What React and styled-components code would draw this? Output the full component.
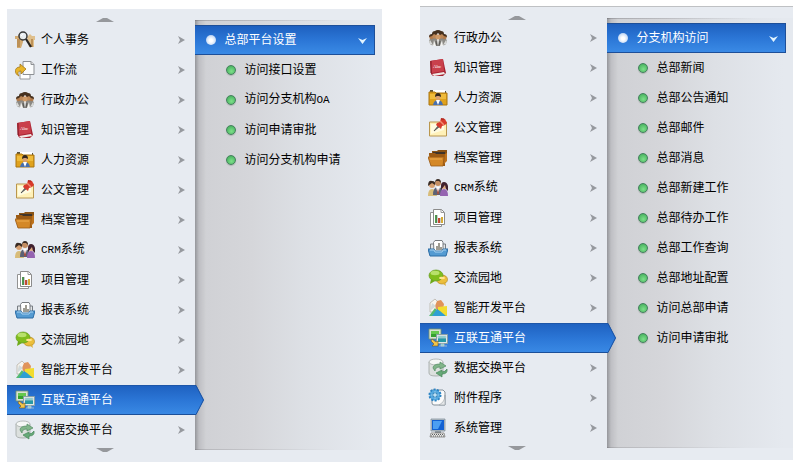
import React, { useState } from "react";
import styled, { createGlobalStyle, css } from "styled-components";

const GlobalStyle = createGlobalStyle`
  * { box-sizing: border-box; }
  body {
    margin: 0;
    background: #fff;
    color: #000;
    font-family: "Noto Sans CJK SC", sans-serif;
    font-size: 12px;
    line-height: 30px;
  }
  button, a { font: inherit; color: inherit; }
`;

const Page = styled.main`
  display: grid;
  grid-template-columns: 375fr 373fr;
  align-items: start;
  column-gap: 38px;
  padding: 6px 7px 0;
`;

const Panel = styled.section`
  display: grid;
  grid-template-columns: 1fr 1fr;
  align-items: start;
  background: #e7ebf1;
  padding: 9px 0 10px;
  ${(p) =>
    p.$ruled
      ? css`
          border-top: 1px solid #bfc1c4;
        `
      : css`
          margin-top: 3px;
        `}
`;

const MainMenu = styled.nav`
  display: flex;
  flex-direction: column;
`;

const List = styled.ul`
  list-style: none;
  margin: 0;
  padding: 0;
`;

const ScrollButton = styled.button`
  display: flex;
  justify-content: center;
  align-items: ${(p) => (p.$down ? "flex-end" : "flex-start")};
  height: 7px;
  padding: 0;
  border: 0;
  background: none;
  margin-left: 8px;
  cursor: pointer;
  svg { display: block; flex: none; }
`;

const MenuButton = styled.button`
  position: relative;
  display: flex;
  align-items: center;
  gap: 6px;
  width: 100%;
  height: 30px;
  padding: 0 10px 0 8px;
  border: 0;
  background: none;
  text-align: left;
  white-space: nowrap;
  cursor: pointer;
  ${(p) =>
    p.$active &&
    css`
      z-index: 1;
      color: #fff;
      background: linear-gradient(#1e60bf, #2b76d6 50%, #3a8ae5);
      box-shadow: inset 0 1px #1d56a8, inset 0 -1px #1b4f99;
    `}
`;

const Label = styled.span`
  flex: 1;
  padding-bottom: 2px;
`;

const Latin = styled.span`
  font-family: "Liberation Mono", monospace;
  font-size: 11px;
`;

const Pointer = styled.svg`
  position: absolute;
  left: 100%;
  top: 0;
`;

const SubMenu = styled.nav`
  min-height: 430px;
  margin-top: 2px;
  padding: 5px 7px 0 0;
  background:
    linear-gradient(90deg, rgba(70, 70, 75, 0.42), rgba(90, 90, 95, 0.15) 4px, transparent 11px),
    linear-gradient(90deg, rgba(120, 120, 125, 0.45), transparent 80%) top / 100% 1px no-repeat,
    linear-gradient(90deg, rgba(120, 120, 125, 0.3), transparent 75%) bottom / 100% 1px no-repeat,
    linear-gradient(90deg, #cfd0d4, #d5d6da 30%, #dde0e5 58%, #e5e9ef 95%);
`;

const GroupButton = styled.button`
  display: flex;
  align-items: center;
  gap: 9px;
  width: 100%;
  height: 30px;
  padding: 0 7px 0 11px;
  border: 1px solid #1d4f99;
  border-left: 0;
  color: #fff;
  background: linear-gradient(#1e60bf, #2b76d6 50%, #3a8ae5);
  text-align: left;
  white-space: nowrap;
  cursor: pointer;
`;

const SubLink = styled.a`
  display: flex;
  align-items: center;
  gap: 9px;
  height: 30px;
  padding-left: 31px;
  text-decoration: none;
  white-space: nowrap;
`;

const Dot = styled.span`
  flex: none;
  width: 10px;
  height: 10px;
  border-radius: 50%;
  ${(p) =>
    p.$pale
      ? css`
          background: radial-gradient(circle at 50% 55%, #fff 20%, #d5e4f8 55%, #8eb2e6);
        `
      : css`
          border: 1px solid #44805e;
          background: radial-gradient(circle at 55% 65%, #7de08a, #4cb562 75%);
          box-shadow: 0 1px 1px #aeb5b1;
        `}
`;

const IconSvg = styled.svg`
  flex: none;
  display: block;
`;

const drawings = {
  personal: (
    <>
      <path d="M0 6h3l1-2 4 4v4l-2 6H2V9H0z" fill="#d3ab72" />
      <path d="M12 7l3-3 2 2h3v4h-1v7h-5z" fill="#dfbf8c" />
      <path d="M2 9v8h3V9zM16 9v8h2V9z" fill="#bd9157" />
      <circle cx="8" cy="6" r="4" fill="#e8edf1" fillOpacity=".9" stroke="#383838" strokeWidth="1.500" />
      <path d="m11 9 5 8" stroke="#292522" strokeWidth="2.200" />
      <path d="m6 6 2-2" stroke="#fff" />
    </>
  ),
  workflow: (
    <>
      <path d="M5 7h10v12H5z" fill="#fff" stroke="#96999d" />
      <path d="M8 1.500h8l3 3v10H8z" fill="#fafbfc" stroke="#8d9095" />
      <path d="M16 1.500v3h3" fill="#ddd" stroke="#8d9095" />
      <path d="M4 16C-1 14-1 7 5 7V4l6 5-5 5v-3c-3 0-4 2-2 5z" fill="#e9b528" stroke="#a4791d" strokeWidth=".8" />
    </>
  ),
  office: (
    <>
      <path d="M1 14q0-4 4-4h10q4 0 4 4l-2 3-7 1-7-1z" fill="#8b8984" />
      <path d="m2 12 3 5-3-1-1-2zM18 12l-3 5 3-1 1-2z" fill="#d8d9d8" />
      <path d="m6 12 2 6H5zM14 12l-2 6h3zM9 11l1 7 1-7z" fill="#f3f3f1" />
      <circle cx="3.500" cy="9" r="2.300" fill="#b07a4c" />
      <circle cx="16.500" cy="9" r="2.300" fill="#b07a4c" />
      <circle cx="7" cy="8" r="2.600" fill="#bd8757" />
      <circle cx="13" cy="8" r="2.600" fill="#bd8757" />
      <circle cx="10" cy="9" r="2.500" fill="#cf9a68" />
      <path d="M1 9q0-3 3-3 0-3 3-3 1-1 3-1t3 1q3 0 3 3 3 0 3 3l-3-1-2-2-2 1-2-2-2 2-2-1-2 2z" fill="#46311f" />
      <path d="m8 13 1 5M12 13l-1 5" stroke="#4c4b49" strokeWidth=".8" />
    </>
  ),
  knowledge: (
    <>
      <path d="M2 3 15 1l3 14-3 3H5L3 16z" fill="#a62231" />
      <path d="M2 3 15 1l1 12-12 2z" fill="#c9404c" />
      <path d="m4 16 12-2 1 2-11 2z" fill="#f1e8e4" />
      <path d="M3 3v12" stroke="#7f1421" />
      <text x="5" y="10" fontFamily="Liberation Serif, serif" fontSize="5" fill="#fff">Abc</text>
    </>
  ),
  people: (
    <>
      <path d="M2 4V2h7l1 1h8v4H2z" fill="#59533e" />
      <path d="M5 2h12v4H5z" fill="#fff" />
      <path d="M1 4h6l1 1h11v12H1z" fill="#e0a21d" stroke="#a97410" />
      <path d="M2 6h16v5H2z" fill="#f2c244" opacity=".8" />
      <path d="M5 17q1-5 5-5t5 5z" fill="#486fae" />
      <path d="m8 12 2 5 2-5z" fill="#fff" />
      <circle cx="10" cy="9.500" r="2.500" fill="#d9a071" />
      <path d="M7 9q0-4 3-4t3 4l-2-1H9z" fill="#33271e" />
    </>
  ),
  document: (
    <>
      <path d="M1.500 4h17v14h-17z" fill="#fff1b9" stroke="#b9964e" />
      <path d="M3 6h13v6L3 16z" fill="#fffbe0" />
      <path d="m6 13 5-6 1 1z" stroke="#555" fill="#777" />
      <path d="m9 5 3-1 1-4 4 1 2 4-2 2-3 1-1 3-5-4z" fill="#d83a2c" />
      <path d="m12 3 4 4" stroke="#f28b71" strokeWidth="1.500" />
      <path d="m13 1 3 0" stroke="#981f19" />
    </>
  ),
  archive: (
    <>
      <path d="M4 5V3h5l1-1h9v10H4z" fill="#895316" />
      <path d="M5 4h12v2H5z" fill="#3f342a" />
      <path d="M1 7V5h6l1 1h9v12H3z" fill="#9b5a14" />
      <path d="M0 9h16l-1 9H3L0 9z" fill="#d48827" stroke="#9a5b16" strokeWidth=".8" />
      <path d="m17 6 2-1v8l-3 3z" fill="#bd731e" />
      <path d="M2 11h12" stroke="#edab4f" />
    </>
  ),
  crm: (
    <>
      <path d="M0 18q0-7 4-7t5 7z" fill="#d8bc79" />
      <path d="M5 17q0-8 5-8t5 8z" fill="#5c6276" />
      <path d="M12 18q0-7 4-7t4 7z" fill="#9564b1" />
      <path d="m8 9 2 7 2-7z" fill="#fff" />
      <path d="m10 10-1 5 1 2 1-2z" fill="#a74635" />
      <circle cx="4" cy="7" r="3" fill="#d7a071" />
      <circle cx="10" cy="5" r="3" fill="#c38d62" />
      <circle cx="16" cy="8" r="3" fill="#dfaa80" />
      <path d="M0 8q0-6 4-5 4 0 3 4L4 5zM7 5q0-4 3-4t3 4l-2-2H8z" fill="#392b24" />
      <path d="M13 12V8q0-4 3-4t4 4v5l-2-2-1-4z" fill="#40212e" />
    </>
  ),
  project: (
    <>
      <path d="M2.500 4.500h11v14h-11z" fill="#fff" stroke="#929292" />
      <path d="M5.500 1.500h8l3 3v12h-11z" fill="#fff" stroke="#8b8b8b" />
      <path d="M13 1.500v3h3" fill="none" stroke="#999" />
      <path d="M7 7h2v8H7z" fill="#4e9e4d" />
      <path d="M10 10h2v5h-2z" fill="#d54830" />
      <path d="M13 9h2v6h-2z" fill="#d6ac35" />
      <path d="M9 7v8M12 10v5" stroke="#555" strokeWidth=".6" />
    </>
  ),
  report: (
    <>
      <path d="M2.500 6h5v10h-5zM12.500 6h5v9h-5z" fill="#e2e5e7" stroke="#777d83" />
      <path d="M5.500 4.500 7 2.500h7l1 2V14h-9z" fill="#fff" stroke="#777b80" />
      <path d="M9 8v4M11 5v7M13 9v3" stroke="#6b6758" strokeWidth="1.300" />
      <path d="M0 11h6l1 2h7l1-2h5l-2 7H2z" fill="#559bd2" stroke="#2c6ca5" />
      <path d="M2 12h4l1 2h7l1-2h3" fill="none" stroke="#abd4f0" />
    </>
  ),
  forum: (
    <>
      <ellipse cx="14" cy="11.500" rx="5.500" ry="4.500" fill="#ecbf3c" stroke="#b28a28" strokeWidth=".7" />
      <path d="m14 15 4 3-1-4z" fill="#ddb035" />
      <ellipse cx="8" cy="7.500" rx="7" ry="5.500" fill="#80bd1d" stroke="#639a20" strokeWidth=".7" />
      <path d="m3 11-1 5 5-3z" fill="#6eaa19" />
      <ellipse cx="7" cy="5" rx="4.500" ry="2.200" fill="#c2e779" opacity=".85" />
      <ellipse cx="14" cy="10" rx="3" ry="1.300" fill="#ffe58c" />
    </>
  ),
  smart: (
    <>
      <path d="M2 5 7 1l3 3v10H2z" fill="#f7f4ee" stroke="#b8b3aa" strokeWidth=".8" />
      <path d="m7 8 2-5 4-1 3 4-1 5-6 2z" fill="#e0935a" />
      <path d="m4 5-2 8 6-5z" fill="#d2dadb" />
      <path d="m10 9 9-1v10h-9z" fill="#f2dc30" />
      <path d="m1 18 6-8 6 8z" fill="#55ba71" />
      <path d="m4 18 5-7 3 2 6 5z" fill="#2f9fd3" />
    </>
  ),
  interconnect: (
    <>
      <path d="M1 1h12v10H1z" fill="#d8e2d3" stroke="#73936c" strokeWidth=".8" />
      <path d="M3 3h8v6H3z" fill="#35a12e" />
      <path d="M3 3h8v3H3z" fill="#65c84e" />
      <path d="M8.500 6.500h11v9h-11z" fill="#e2e8e8" stroke="#879fa5" />
      <path d="M10 8h8v6h-8z" fill="#2799a5" />
      <path d="M10 8h8v2h-8zM13 16h3v2h-3zM11 18h8" fill="#75cbc8" stroke="#c0ced4" strokeWidth=".7" />
      <path d="m4 11 4 3 2-1v5H4l2-2-3-3z" fill="#f1c54b" stroke="#755820" strokeWidth=".6" />
    </>
  ),
  exchange: (
    <>
      <path d="M1 4v11q0 3 7 3t7-3V4z" fill="#dce0de" stroke="#9fa5a3" strokeWidth=".8" />
      <ellipse cx="8" cy="4" rx="7" ry="3" fill="#f5f7f6" stroke="#a8afac" strokeWidth=".8" />
      <path d="M5 10q0-4 7-4V4l6 4-6 3V9q-5 0-5 4z" fill="#81b58a" stroke="#528c61" strokeWidth=".7" />
      <path d="M19 11q1 5-5 5v3l-6-4 6-3v2q3 0 5-3z" fill="#66a978" stroke="#47865a" strokeWidth=".7" />
    </>
  ),
  attachment: (
    <>
      <path d="M4 2h11l2 2v13H6q-2 0-2-2z" fill="#fafafa" stroke="#85919a" />
      <path d="M17 7q0 7-6 10h6z" fill="#e4e7e9" stroke="#98a0a5" strokeWidth=".6" />
      <circle cx="7" cy="7" r="5.500" fill="#58aee3" stroke="#2b83c4" strokeWidth="2" strokeDasharray="2 1.400" />
      <circle cx="7" cy="7" r="4.500" fill="#55a8df" />
      <circle cx="7" cy="7" r="2.200" fill="#dceff9" stroke="#2375ac" />
      <path d="M7 3v8M3 7h8" stroke="#a9d9f4" strokeWidth=".7" />
    </>
  ),
  system: (
    <>
      <path d="M3 1h14v12H3z" fill="#bbc3cb" stroke="#76848f" strokeWidth=".7" />
      <path d="M4 2h12v10H4z" fill="#1260d3" />
      <path d="M5 3h9l-4 8H5z" fill="#4c9ef2" />
      <path d="M7 13h6v2H7z" fill="#8a949c" />
      <path d="M3 15h13l1 4H2z" fill="#e9e9e7" stroke="#706f6b" strokeWidth=".7" />
      <path d="M4 16.500h11M3 18h13" stroke="#5c5e60" strokeDasharray="1 1" />
    </>
  ),
};

const labels = {
  personal: "个人事务",
  workflow: "工作流",
  office: "行政办公",
  knowledge: "知识管理",
  people: "人力资源",
  document: "公文管理",
  archive: "档案管理",
  crm: "CRM系统",
  project: "项目管理",
  report: "报表系统",
  forum: "交流园地",
  smart: "智能开发平台",
  interconnect: "互联互通平台",
  exchange: "数据交换平台",
  attachment: "附件程序",
  system: "系统管理",
};

const allKeys = Object.keys(labels);

const panels = [
  {
    keys: allKeys.slice(0, 14),
    group: "总部平台设置",
    links: ["访问接口设置", "访问分支机构OA", "访问申请审批", "访问分支机构申请"],
  },
  {
    ruled: true,
    keys: allKeys.slice(2),
    group: "分支机构访问",
    links: [
      "总部新闻",
      "总部公告通知",
      "总部邮件",
      "总部消息",
      "总部新建工作",
      "总部待办工作",
      "总部工作查询",
      "总部地址配置",
      "访问总部申请",
      "访问申请审批",
    ],
  },
];

function Text({ children }) {
  return children
    .split(/([A-Z]+)/)
    .filter(Boolean)
    .map((part, i) => (/[A-Z]/.test(part) ? <Latin key={i}>{part}</Latin> : part));
}

function MenuItem({ id, active, onSelect }) {
  return (
    <li>
      <MenuButton type="button" $active={active} aria-current={active || undefined} onClick={onSelect}>
        <IconSvg width="20" height="20" viewBox="0 0 20 20" aria-hidden="true">
          {drawings[id]}
        </IconSvg>
        <Label><Text>{labels[id]}</Text></Label>
        {active ? (
          <Pointer width="9" height="30" viewBox="0 0 9 30" aria-hidden="true">
            <defs>
              <linearGradient id="pointer-fill" x2="0" y2="1">
                <stop stopColor="#1e60bf" />
                <stop offset=".5" stopColor="#2b76d6" />
                <stop offset="1" stopColor="#3a8ae5" />
              </linearGradient>
            </defs>
            <path d="M0 0h1l8 15-8 15H0z" fill="url(#pointer-fill)" />
            <path d="M0 .5h1l7.500 14.500L1 29.500H0" fill="none" stroke="#1d53a1" />
          </Pointer>
        ) : (
          <IconSvg width="7" height="8" viewBox="0 0 7 8" aria-hidden="true">
            <path d="M0 0 7 4 0 8l2-4z" fill="#96999e" />
          </IconSvg>
        )}
      </MenuButton>
    </li>
  );
}

function MenuPanel({ data }) {
  const [selected, setSelected] = useState("interconnect");
  const [open, setOpen] = useState(true);
  return (
    <Panel $ruled={data.ruled}>
      <MainMenu>
        <ScrollButton type="button" aria-label="向上滚动">
          <svg width="18" height="4" viewBox="0 0 18 4"><path d="M0 4 7 0h4l7 4z" fill="#96989c" /></svg>
        </ScrollButton>
        <List>
          {data.keys.map((id) => (
            <MenuItem key={id} id={id} active={id === selected} onSelect={() => setSelected(id)} />
          ))}
        </List>
        <ScrollButton type="button" $down aria-label="向下滚动">
          <svg width="18" height="4" viewBox="0 0 18 4"><path d="M0 0h18l-7 4H7z" fill="#96989c" /></svg>
        </ScrollButton>
      </MainMenu>
      <SubMenu>
        <GroupButton type="button" aria-expanded={open} onClick={() => setOpen(!open)}>
          <Dot $pale />
          <Label>{data.group}</Label>
          <IconSvg width="9" height="7" viewBox="0 0 9 7" aria-hidden="true">
            <path d="m0 1 4.500 2L9 1 4.500 7z" fill="#e2f4ff" />
          </IconSvg>
        </GroupButton>
        {open && (
          <List>
            {data.links.map((link) => (
              <li key={link}>
                <SubLink href="#">
                  <Dot />
                  <Label><Text>{link}</Text></Label>
                </SubLink>
              </li>
            ))}
          </List>
        )}
      </SubMenu>
    </Panel>
  );
}

export default function App() {
  return (
    <>
      <GlobalStyle />
      <Page>
        {panels.map((data) => (
          <MenuPanel key={data.group} data={data} />
        ))}
      </Page>
    </>
  );
}
